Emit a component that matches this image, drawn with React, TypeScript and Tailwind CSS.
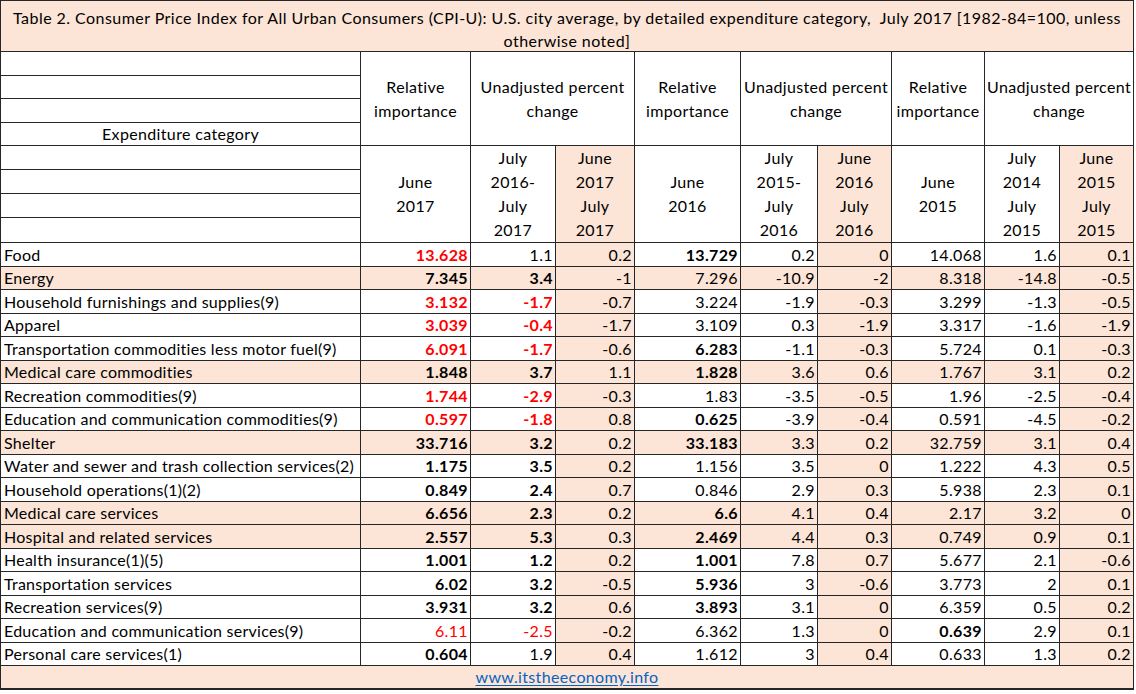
import React from "react";

const PEACH = "bg-[#fce4d6]";

type Row = { label: string; bg: boolean; cells: string[] };

const rows: Row[] = [
  { label: "Food", bg: false, cells: ["!13.628", "1.1", "0.2", "*13.729", "0.2", "0", "14.068", "1.6", "0.1"] },
  { label: "Energy", bg: true, cells: ["*7.345", "*3.4", "-1", "7.296", "-10.9", "-2", "8.318", "-14.8", "-0.5"] },
  { label: "Household furnishings and supplies(9)", bg: false, cells: ["!3.132", "!-1.7", "-0.7", "3.224", "-1.9", "-0.3", "3.299", "-1.3", "-0.5"] },
  { label: "Apparel", bg: false, cells: ["!3.039", "!-0.4", "-1.7", "3.109", "0.3", "-1.9", "3.317", "-1.6", "-1.9"] },
  { label: "Transportation commodities less motor fuel(9)", bg: false, cells: ["!6.091", "!-1.7", "-0.6", "*6.283", "-1.1", "-0.3", "5.724", "0.1", "-0.3"] },
  { label: "Medical care commodities", bg: true, cells: ["*1.848", "*3.7", "1.1", "*1.828", "3.6", "0.6", "1.767", "3.1", "0.2"] },
  { label: "Recreation commodities(9)", bg: false, cells: ["!1.744", "!-2.9", "-0.3", "1.83", "-3.5", "-0.5", "1.96", "-2.5", "-0.4"] },
  { label: "Education and communication commodities(9)", bg: false, cells: ["!0.597", "!-1.8", "0.8", "*0.625", "-3.9", "-0.4", "0.591", "-4.5", "-0.2"] },
  { label: "Shelter", bg: true, cells: ["*33.716", "*3.2", "0.2", "*33.183", "3.3", "0.2", "32.759", "3.1", "0.4"] },
  { label: "Water and sewer and trash collection services(2)", bg: false, cells: ["*1.175", "*3.5", "0.2", "1.156", "3.5", "0", "1.222", "4.3", "0.5"] },
  { label: "Household operations(1)(2)", bg: false, cells: ["*0.849", "*2.4", "0.7", "0.846", "2.9", "0.3", "5.938", "2.3", "0.1"] },
  { label: "Medical care services", bg: true, cells: ["*6.656", "*2.3", "0.2", "*6.6", "4.1", "0.4", "2.17", "3.2", "0"] },
  { label: "Hospital and related services", bg: true, cells: ["*2.557", "*5.3", "0.3", "*2.469", "4.4", "0.3", "0.749", "0.9", "0.1"] },
  { label: "Health insurance(1)(5)", bg: false, cells: ["*1.001", "*1.2", "0.2", "*1.001", "7.8", "0.7", "5.677", "2.1", "-0.6"] },
  { label: "Transportation services", bg: false, cells: ["*6.02", "*3.2", "-0.5", "*5.936", "3", "-0.6", "3.773", "2", "0.1"] },
  { label: "Recreation services(9)", bg: false, cells: ["*3.931", "*3.2", "0.6", "*3.893", "3.1", "0", "6.359", "0.5", "0.2"] },
  { label: "Education and communication services(9)", bg: false, cells: ["~6.11", "~-2.5", "-0.2", "6.362", "1.3", "0", "*0.639", "2.9", "0.1"] },
  { label: "Personal care services(1)", bg: false, cells: ["*0.604", "1.9", "0.4", "1.612", "3", "0.4", "0.633", "1.3", "0.2"] },
];

const cellB = "border-r border-b border-[#262626]";

function NumCell({ v, shaded }: { v: string; shaded: boolean }) {
  let cls = "";
  let text = v;
  if (v.startsWith("!")) {
    cls = "font-bold text-[#ff0000]";
    text = v.slice(1);
  } else if (v.startsWith("*")) {
    cls = "font-bold";
    text = v.slice(1);
  } else if (v.startsWith("~")) {
    cls = "text-[#ff0000]";
    text = v.slice(1);
  }
  return (
    <div className={`${cellB} ${shaded ? PEACH : ""} flex items-center justify-end pr-[2px] ${cls}`}>
      {text}
    </div>
  );
}

function LowerRange({ a, b, c, d, shaded }: { a: string; b: string; c: string; d: string; shaded: boolean }) {
  return (
    <div className={`${cellB} row-span-4 ${shaded ? PEACH : ""} flex flex-col items-center`}>
      {[a, b, c, d].map((t, i) => (
        <div key={i} className="h-[24px] flex items-center">
          {t}
        </div>
      ))}
    </div>
  );
}

export default function App() {
  return (
    <div className="w-[1136px] h-[694px] bg-white overflow-hidden text-black text-[16px] tracking-[0.35px] leading-none" style={{ fontFamily: "Lato, 'Open Sans', sans-serif" }}>
      <div className="grid w-[1134px] border-l border-t border-[#262626] grid-cols-[360px_110px_85px_79px_106px_77px_74px_93px_75px_74px] grid-rows-[51px_24px_23px_24px_23px_24px_24px_24px_25px_repeat(9,24px_23px)_24px]">
        {/* Title */}
        <div className={`${cellB} col-span-10 ${PEACH} text-center leading-[23px] pt-[5px] whitespace-nowrap tracking-[0.45px]`}>
          Table 2. Consumer Price Index for All Urban Consumers (CPI-U): U.S. city average, by detailed expenditure category,&nbsp; July 2017 [1982-84=100, unless
          <br />
          otherwise noted]
        </div>

        {/* Upper header row */}
        <div className={cellB}></div>
        {[0, 1, 2].map((g) => (
          <React.Fragment key={g}>
            <div className={`${cellB} row-span-4 flex items-center justify-center text-center leading-[24px] whitespace-nowrap`}>
              Relative
              <br />
              importance
            </div>
            <div className={`${cellB} col-span-2 row-span-4 flex items-center justify-center text-center leading-[24px] whitespace-nowrap`}>
              Unadjusted percent
              <br />
              change
            </div>
          </React.Fragment>
        ))}
        <div className={cellB}></div>
        <div className={cellB}></div>
        <div className={`${cellB} flex items-center justify-center`}>Expenditure category</div>

        {/* Lower header row */}
        <div className={cellB}></div>
        {[
          ["2017", "2016", "2017", "2017"],
          ["2016", "2015", "2016", "2016"],
          ["2015", "2014", "2015", "2015"],
        ].map(([y, y0, y1, y2], g) => (
          <React.Fragment key={g}>
            <div className={`${cellB} row-span-4 flex items-center justify-center text-center leading-[24px]`}>
              June
              <br />
              {y}
            </div>
            <LowerRange a="July" b={g === 2 ? y0 : `${y0}-`} c="July" d={y1} shaded={false} />
            <LowerRange a="June" b={y2} c="July" d={y2} shaded={true} />
          </React.Fragment>
        ))}
        <div className={cellB}></div>
        <div className={cellB}></div>
        <div className={cellB}></div>

        {/* Data rows */}
        {rows.map((r) => (
          <React.Fragment key={r.label}>
            <div className={`${cellB} ${r.bg ? PEACH : ""} flex items-center pl-[3px] whitespace-nowrap overflow-hidden tracking-[0.25px]`}>{r.label}</div>
            {r.cells.map((v, i) => (
              <NumCell key={i} v={v} shaded={r.bg || i % 3 === 2} />
            ))}
          </React.Fragment>
        ))}

        {/* Footer */}
        <div className={`${cellB} border-b-2 col-span-10 ${PEACH} flex items-center justify-center`}>
          <span className="text-[#0563c1] underline underline-offset-2">www.itstheeconomy.info</span>
        </div>
      </div>
    </div>
  );
}
